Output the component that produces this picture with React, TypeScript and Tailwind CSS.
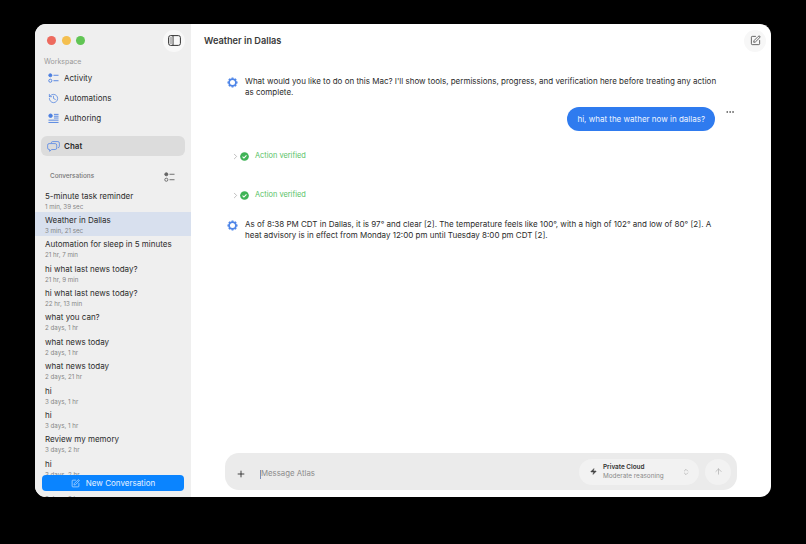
import React from "react";
import { Plus, ChevronRight, ArrowUp, Zap, ChevronsUpDown, SquarePen, Ellipsis, History } from "lucide-react";

const conversations = [
  { title: "5-minute task reminder", age: "1 min, 39 sec" },
  { title: "Weather in Dallas", age: "3 min, 21 sec", active: true },
  { title: "Automation for sleep in 5 minutes", age: "21 hr, 7 min" },
  { title: "hi what last news today?", age: "21 hr, 9 min" },
  { title: "hi what last news today?", age: "22 hr, 13 min" },
  { title: "what you can?", age: "2 days, 1 hr" },
  { title: "what news today", age: "2 days, 1 hr" },
  { title: "what news today", age: "2 days, 21 hr" },
  { title: "hi", age: "3 days, 1 hr" },
  { title: "hi", age: "3 days, 1 hr" },
  { title: "Review my memory", age: "3 days, 2 hr" },
  { title: "hi", age: "3 days, 2 hr" },
  { title: "", age: "3 days, 2 hr" },
];

function ListIcon({ color }: { color: string }) {
  return (
    <svg width="11" height="10" viewBox="0 0 12 11" fill="none" stroke={color} strokeWidth="1">
      <circle cx="2.5" cy="2.5" r="1.7" fill={color} />
      <circle cx="2.5" cy="8.5" r="1.7" />
      <path d="M6 2.5h5.5M6 8.5h5.5" />
    </svg>
  );
}

function AuthoringIcon() {
  return (
    <svg width="11" height="11" viewBox="0 0 12 12" fill="none" stroke="#4c7fe0" strokeWidth="1">
      <circle cx="2.8" cy="3" r="1.9" fill="#4c7fe0" />
      <path d="M6.5 1.5h5M6.5 3.5h5M6.5 5.5h5M.5 7.8h11M.5 10.3h11" />
    </svg>
  );
}

function ChatIcon() {
  return (
    <svg width="13" height="11" viewBox="0 0 14 12" fill="none" stroke="#5b8ae6" strokeWidth="0.9">
      <path d="M4.6 2.4V2a1.6 1.6 0 0 1 1.6-1.4h5.6A1.7 1.7 0 0 1 13.4 2.3v3.4a1.7 1.7 0 0 1-1.6 1.7" />
      <path d="M2.2 2.8h6.6a1.7 1.7 0 0 1 1.7 1.7v3.1a1.7 1.7 0 0 1-1.7 1.7H5L2.8 11.2V9.3h-.6A1.7 1.7 0 0 1 .6 7.6V4.5a1.7 1.7 0 0 1 1.6-1.7z" />
    </svg>
  );
}

function SidebarToggleIcon() {
  return (
    <svg width="13" height="11" viewBox="0 0 13 11" fill="none" stroke="#333" strokeWidth="1">
      <rect x=".6" y=".6" width="11.8" height="9.8" rx="2" />
      <path d="M5 .6v9.8" />
      <path d="M1.5 2h3v7h-3z" fill="#bbb" stroke="none" />
    </svg>
  );
}

function AtlasIcon() {
  return (
    <svg width="11" height="11" viewBox="0 0 24 24" fill="none" stroke="#4f86e8" strokeWidth="4" className="shrink-0 mt-[1px]">
      <circle cx="12" cy="12" r="7.5" />
      <path d="M12 1v3M12 20v3M1 12h3M20 12h3M4.2 4.2l2.2 2.2M17.6 17.6l2.2 2.2M4.2 19.8l2.2-2.2M17.6 6.4l2.2-2.2" />
    </svg>
  );
}

function VerifiedRow() {
  return (
    <div className="flex items-center h-[14px] pl-[7px] text-[7.4px] text-[#58c266]">
      <ChevronRight className="w-[9px] h-[9px] text-[#a9a9a9]" strokeWidth={2} />
      <svg width="9" height="9" viewBox="0 0 12 12" className="mr-[6px]">
        <circle cx="6" cy="6" r="5.8" fill="#3fb356" />
        <path d="M3.4 6.2l1.8 1.8 3.4-3.6" fill="none" stroke="#fff" strokeWidth="1.4" />
      </svg>
      <span className="mt-[1px]">Action verified</span>
    </div>
  );
}

function NavRow({ icon, label }: { icon: React.ReactNode; label: string }) {
  return (
    <div className="flex items-center h-[20px] pl-[13px] text-[8px] text-[#2b2b2b]">
      <span className="w-[16px] flex items-center">{icon}</span>
      {label}
    </div>
  );
}

export default function App() {
  return (
    <div
      className="w-[806px] h-[544px] bg-black pl-[35px] pt-[24px] overflow-hidden"
      style={{ fontFamily: '"Inter", "Liberation Sans", sans-serif' }}
    >
      <div className="w-[736px] h-[473px] rounded-[11px] overflow-hidden flex bg-white">
        {/* Sidebar */}
        <aside className="relative w-[156px] h-full shrink-0 bg-[#efefef] overflow-hidden">
          <div className="flex items-center justify-between h-[32px] pl-[12px] pr-[6px] pt-[1px]">
            <div className="flex items-center gap-[5.5px]">
              <span className="w-[9px] h-[9px] rounded-full bg-[#ed6a5e]" />
              <span className="w-[9px] h-[9px] rounded-full bg-[#f4bf4f]" />
              <span className="w-[9px] h-[9px] rounded-full bg-[#61c554]" />
            </div>
            <span className="w-[22px] h-[22px] rounded-full bg-[#f8f8f8] flex items-center justify-center">
              <SidebarToggleIcon />
            </span>
          </div>
          <div className="pl-[9px] text-[7px] leading-[10px] text-[#9a9a9a] mt-[1px] mb-[1px]">Workspace</div>
          <NavRow icon={<ListIcon color="#4c7fe0" />} label="Activity" />
          <NavRow icon={<History className="w-[11px] h-[11px] text-[#4c7fe0]" strokeWidth={1.6} />} label="Automations" />
          <NavRow icon={<AuthoringIcon />} label="Authoring" />
          <div className="mx-[6px] mt-[8px] h-[20px] rounded-[6px] bg-[#dcdcdc] flex items-center pl-[6px] text-[8px] font-semibold text-[#2b2b2b]">
            <span className="w-[17px] flex items-center"><ChatIcon /></span>
            Chat
          </div>
          <div className="flex items-center justify-between pl-[15px] pr-[16px] h-[14px] mt-[14px] mb-[3.5px] text-[6.4px] font-medium text-[#777]">
            Conversations
            <ListIcon color="#666" />
          </div>
          <div>
            {conversations.map((c, i) => (
              <div
                key={i}
                className={`h-[24.4px] pl-[10px] pt-[2px] ${c.active ? "bg-[#d8e0ee]" : ""}`}
              >
                <div className="h-[12px] text-[8px] leading-[12px] text-[#2b2b2b] whitespace-nowrap">{c.title}</div>
                <div className="text-[6.2px] leading-[9px] text-[#858585] whitespace-nowrap">{c.age}</div>
              </div>
            ))}
          </div>
          <div className="absolute left-[7px] bottom-[6px] w-[142px] h-[16px] rounded-[4px] bg-[#0a84ff] flex items-center justify-center gap-[6px] text-[8px] text-[#e8f2ff]">
            <SquarePen className="w-[9px] h-[9px]" strokeWidth={1.6} />
            New Conversation
          </div>
        </aside>

        {/* Main */}
        <main className="flex-1 min-w-0 flex flex-col">
          <header className="flex items-center justify-between h-[32px] pl-[13px] pr-[5px] pt-[1px]">
            <h1 className="text-[9.2px] font-semibold text-[#3a3a3a]">Weather in Dallas</h1>
            <span className="w-[22px] h-[22px] rounded-full bg-[#f7f7f7] flex items-center justify-center">
              <SquarePen className="w-[11px] h-[11px] text-[#333]" strokeWidth={1.6} />
            </span>
          </header>

          <div className="flex-1 pl-[36px] pr-[50px] pt-[20px] text-[8px] leading-[10.5px] text-[#2b2b2b]">
            <div className="flex gap-[7px]">
              <AtlasIcon />
              <p>
                What would you like to do on this Mac? I'll show tools, permissions, progress, and verification here before treating any action as complete.
              </p>
            </div>
            <div className="relative flex justify-end mt-[10px] mr-[6px]">
              <div className="h-[24px] rounded-full bg-[#2f7bef] text-[#eef5ff] flex items-center px-[10px]">
                hi, what the wather now in dallas?
              </div>
              <Ellipsis className="absolute -right-[20px] top-0 w-[10px] h-[10px] text-[#555]" strokeWidth={2} />
            </div>
            <div className="mt-[18px] -ml-[3px]"><VerifiedRow /></div>
            <div className="mt-[25px] -ml-[3px]"><VerifiedRow /></div>
            <div className="flex gap-[7px] mt-[17px]">
              <AtlasIcon />
              <p>
                As of 8:38 PM CDT in Dallas, it is 97° and clear [2]. The temperature feels like 100°, with a high of 102° and low of 80° [2]. A heat advisory is in effect from Monday 12:00 pm until Tuesday 8:00 pm CDT [2].
              </p>
            </div>
          </div>

          <div className="mx-[34px] mb-[7px] h-[37px] rounded-[14px] bg-[#ebebeb] flex items-center pl-[11px] pr-[6px]">
            <Plus className="w-[10px] h-[10px] text-[#222] mt-[4px]" strokeWidth={2} />
            <span className="ml-[14px] w-px h-[9px] bg-[#7d8fb5] mt-[5px]" />
            <span className="text-[7.8px] text-[#8c8c8c] mt-[5px]">Message Atlas</span>
            <div className="ml-auto w-[120px] h-[26px] rounded-full bg-[#f2f2f2] flex items-center pl-[11px] pr-[9px]">
              <Zap className="w-[7px] h-[7px] text-[#444]" fill="#444" strokeWidth={1.5} />
              <div className="ml-[6px] flex-1">
                <div className="text-[6.4px] leading-[8.5px] font-semibold text-[#333]">Private Cloud</div>
                <div className="text-[6.4px] leading-[8.5px] text-[#8a8a8a]">Moderate reasoning</div>
              </div>
              <ChevronsUpDown className="w-[8px] h-[8px] text-[#999]" strokeWidth={1.6} />
            </div>
            <span className="ml-[6px] w-[26px] h-[26px] rounded-full bg-[#f2f2f2] flex items-center justify-center">
              <ArrowUp className="w-[9px] h-[9px] text-[#aaa]" strokeWidth={1.8} />
            </span>
          </div>
        </main>
      </div>
    </div>
  );
}
